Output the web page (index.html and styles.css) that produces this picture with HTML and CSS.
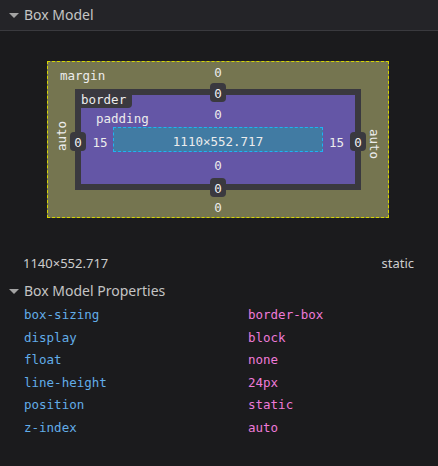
FILE: index.html
```html
<!DOCTYPE html>
<html>
<head>
<meta charset="utf-8">
<link rel="stylesheet" href="styles.css">
</head>
<body>
<header class="pane-header"><span class="tri"></span>Box Model</header>
<section class="bm-wrap">
  <div class="bm-margin">
    <div class="m-label">margin</div>
    <div class="m-top">0</div>
    <div class="m-left"><span class="vert vert-left">auto</span></div>
    <div class="bm-border">
      <span class="border-tab">border</span>
      <div class="b-top"><span class="badge">0</span></div>
      <div class="b-left"><span class="badge">0</span></div>
      <div class="bm-padding">
        <div class="p-label">padding</div>
        <div class="p-top">0</div>
        <div class="p-left">15</div>
        <div class="bm-content">1110×552.717</div>
        <div class="p-right">15</div>
        <div class="p-bottom">0</div>
      </div>
      <div class="b-right"><span class="badge">0</span></div>
      <div class="b-bottom"><span class="badge">0</span></div>
    </div>
    <div class="m-right"><span class="vert vert-right">auto</span></div>
    <div class="m-bottom">0</div>
  </div>
</section>
<div class="dims-row"><span>1140×552.717</span><span>static</span></div>
<div class="section-title"><span class="tri"></span>Box Model Properties</div>
<div class="props">
  <span class="pname">box-sizing</span><span class="pval">border-box</span>
  <span class="pname">display</span><span class="pval">block</span>
  <span class="pname">float</span><span class="pval">none</span>
  <span class="pname">line-height</span><span class="pval">24px</span>
  <span class="pname">position</span><span class="pval">static</span>
  <span class="pname">z-index</span><span class="pval">auto</span>
</div>
</body>
</html>
```
FILE: styles.css
```css
html, body {
  margin: 0;
  padding: 0;
  background: #1b1b1d;
}
body {
  font-family: "Noto Sans", "Open Sans", sans-serif;
  color: #cfcfcf;
}
.pane-header {
  height: 30px;
  line-height: 30px;
  background: #242428;
  border-bottom: 1px solid #3a3a3e;
  font-size: 14px;
  color: #c4c4c4;
  display: flex;
  align-items: center;
}
.tri {
  width: 0;
  height: 0;
  border-left: 5px solid transparent;
  border-right: 5px solid transparent;
  border-top: 5px solid #a3a3a3;
  margin-left: 9px;
  margin-right: 5px;
}

/* box model diagram */
.bm-wrap {
  padding: 30px 0 0 47px;
  font-family: "DejaVu Sans Mono", monospace;
  font-size: 12.5px;
  line-height: 15px;
  color: #ececec;
}
.bm-margin {
  width: 340px;
  display: grid;
  grid-template-columns: 27px 286px 27px;
  grid-template-rows: 27px 101px 27px;
  grid-template-areas:
    "lbl t  ."
    "l   c  r"
    ".   b  .";
  border: 1px dashed #d6d600;
  background: #757550;
}
.m-label {
  grid-area: lbl;
  padding: 6px 0 0 12px;
  white-space: nowrap;
}
.m-top { grid-area: t; text-align: center; padding-top: 3px; }
.m-bottom { grid-area: b; text-align: center; padding-top: 10px; }
.m-left, .m-right {
  display: flex;
  align-items: center;
  justify-content: center;
}
.m-left { grid-area: l; }
.m-right { grid-area: r; }
.vert {
  writing-mode: vertical-rl;
  line-height: 15px;
}
.vert-left {
  transform: rotate(180deg);
  margin: -6px 1px 0 0;
}
.vert-right {
  margin: 10px 0 0 0;
}

.bm-border {
  grid-area: c;
  position: relative;
  display: grid;
  grid-template-columns: 6px 274px 6px;
  grid-template-rows: 6px 89px 6px;
  grid-template-areas:
    ".  t  ."
    "l  c  r"
    ".  b  .";
  background: #3a393f;
}
.border-tab {
  position: absolute;
  left: 0;
  top: 0;
  height: 19px;
  box-sizing: border-box;
  padding: 2px 6px 0;
  line-height: 17px;
  background: #3a393f;
  border-radius: 0 0 4px 0;
  z-index: 2;
}
.b-top, .b-bottom, .b-left, .b-right {
  display: flex;
  justify-content: center;
  align-items: center;
  z-index: 1;
}
.b-top { grid-area: t; }
.b-bottom { grid-area: b; }
.b-left { grid-area: l; align-items: flex-start; padding-top: 37px; }
.b-right { grid-area: r; align-items: flex-start; padding-top: 37px; }
.badge {
  flex: none;
  height: 19px;
  box-sizing: border-box;
  padding: 2px 4px 0;
  line-height: 17px;
  background: #3a393f;
  border-radius: 4px;
  color: #f2f2f2;
}

.bm-padding {
  grid-area: c;
  display: grid;
  grid-template-columns: 32px 210px 32px;
  grid-template-rows: 32px 25px 32px;
  grid-template-areas:
    "lbl t  ."
    "l   c  r"
    ".   b  .";
  background: #6456a6;
}
.p-label {
  grid-area: lbl;
  padding: 16px 0 0 15px;
  white-space: nowrap;
}
.p-top { grid-area: t; text-align: center; padding-top: 12px; }
.p-bottom { grid-area: b; text-align: center; padding-top: 6px; }
.p-left, .p-right {
  text-align: center;
  padding-top: 6px;
  line-height: 19px;
}
.p-left { grid-area: l; padding-left: 6px; }
.p-right { grid-area: r; padding-right: 5px; }
.bm-content {
  grid-area: c;
  border: 1px dashed #1fb3f2;
  background: #417ba3;
  text-align: center;
  padding-top: 5px;
  line-height: 18px;
}

/* lower part */
.dims-row {
  margin-top: 35px;
  display: flex;
  justify-content: space-between;
  padding: 0 24px 0 23px;
  font-size: 13px;
  line-height: 20px;
  color: #cdcdcd;
}
.section-title {
  margin-top: 7px;
  display: flex;
  align-items: center;
  font-size: 14px;
  line-height: 22px;
  color: #c4c4c4;
}
.props {
  margin-top: 2px;
  display: grid;
  grid-template-columns: 224px 1fr;
  grid-auto-rows: 22.5px;
  align-items: center;
  padding-left: 24px;
  font-family: "DejaVu Sans Mono", monospace;
  font-size: 12.5px;
  line-height: 22.5px;
}
.pname { color: #62ade8; }
.pval { color: #ee7ad8; }
```
